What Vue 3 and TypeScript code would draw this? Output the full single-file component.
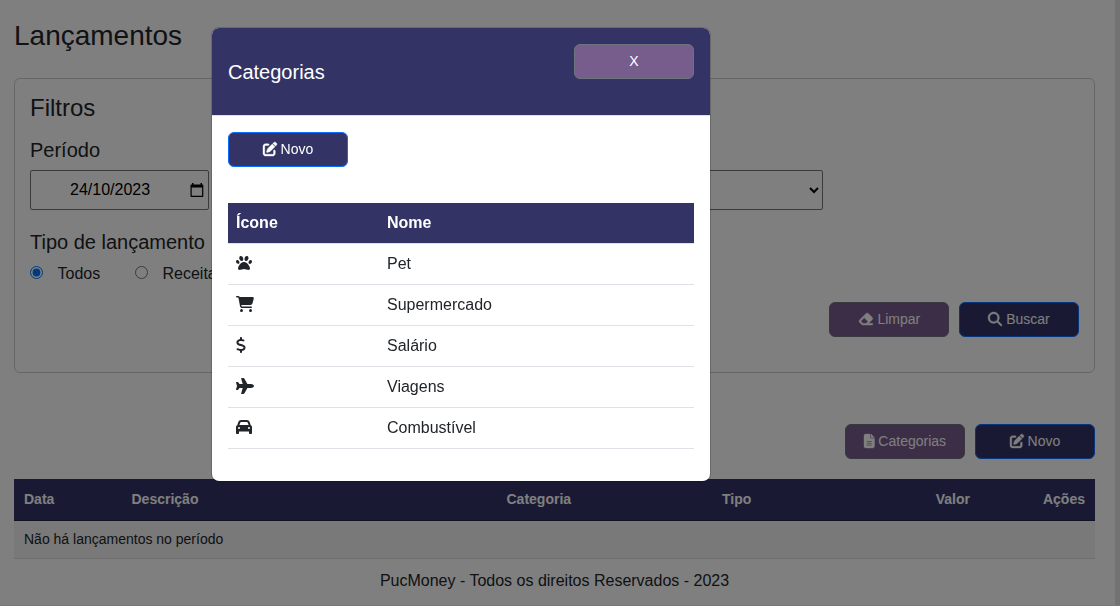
<script setup lang="ts">
import { ref } from 'vue'

interface Icon {
  width: number
  path: string
}

interface Category {
  name: string
  icon: Icon
}

const penToSquare: Icon = {
  width: 512,
  path: 'M471.6 21.7c-21.9-21.9-57.3-21.9-79.2 0L362.3 51.7l97.9 97.9 30.1-30.1c21.9-21.9 21.9-57.3 0-79.2L471.6 21.7zm-299.2 220c-6.1 6.1-10.8 13.6-13.5 21.9l-29.6 88.8c-2.9 8.6-.6 18.1 5.8 24.6s15.9 8.7 24.6 5.8l88.8-29.6c8.2-2.7 15.7-7.4 21.9-13.5L437.7 172.3 339.7 74.3 172.4 241.7zM96 64C43 64 0 107 0 160V416c0 53 43 96 96 96H352c53 0 96-43 96-96V320c0-17.7-14.3-32-32-32s-32 14.3-32 32v96c0 17.7-14.3 32-32 32H96c-17.7 0-32-14.3-32-32V160c0-17.7 14.3-32 32-32h96c17.7 0 32-14.3 32-32s-14.3-32-32-32H96z',
}
const magnifier: Icon = {
  width: 512,
  path: 'M416 208c0 45.9-14.9 88.3-40 122.7L502.6 457.4c12.5 12.5 12.5 32.8 0 45.3s-32.8 12.5-45.3 0L330.7 376c-34.4 25.2-76.8 40-122.7 40C93.1 416 0 322.9 0 208S93.1 0 208 0S416 93.1 416 208zM208 352a144 144 0 1 0 0-288 144 144 0 1 0 0 288z',
}
const eraser: Icon = {
  width: 576,
  path: 'M290.7 57.4L57.4 290.7c-25 25-25 65.5 0 90.5l80 80c12 12 28.3 18.7 45.3 18.7H288h9.4H512c17.7 0 32-14.3 32-32s-14.3-32-32-32H387.9L518.6 285.3c25-25 25-65.5 0-90.5L381.3 57.4c-25-25-65.5-25-90.5 0zM297.4 416H288l-105.4 0-80-80L227.3 211.3 364.7 348.7 297.4 416z',
}
const fileLines: Icon = {
  width: 384,
  path: 'M64 0C28.7 0 0 28.7 0 64V448c0 35.3 28.7 64 64 64H320c35.3 0 64-28.7 64-64V160H256c-17.7 0-32-14.3-32-32V0H64zM256 0V128H384L256 0zM112 256H272c8.8 0 16 7.2 16 16s-7.2 16-16 16H112c-8.8 0-16-7.2-16-16s7.2-16 16-16zm0 64H272c8.8 0 16 7.2 16 16s-7.2 16-16 16H112c-8.8 0-16-7.2-16-16s7.2-16 16-16zm0 64H272c8.8 0 16 7.2 16 16s-7.2 16-16 16H112c-8.8 0-16-7.2-16-16s7.2-16 16-16z',
}

const categories: Category[] = [
  {
    name: 'Pet',
    icon: {
      width: 512,
      path: 'M226.5 92.9c14.3 42.9-.3 86.2-32.6 96.8s-70.1-15.6-84.4-58.5s.3-86.2 32.6-96.8s70.1 15.6 84.4 58.5zM100.4 198.6c18.9 32.4 14.3 70.1-10.2 84.1s-59.7-.9-78.5-33.3S-2.7 179.3 21.8 165.3s59.7 .9 78.5 33.3zM69.2 401.2C121.6 259.9 214.7 224 256 224s134.4 35.9 186.8 177.2c3.6 9.7 5.2 20.1 5.2 30.5v1.6c0 25.8-20.9 46.7-46.7 46.7c-11.5 0-22.9-1.4-34-4.2l-88-22c-15.3-3.8-31.3-3.8-46.6 0l-88 22c-11.1 2.8-22.5 4.2-34 4.2C84.9 480 64 459.1 64 433.3v-1.6c0-10.4 1.6-20.8 5.2-30.5zM421.8 282.7c-24.5-14-29.1-51.7-10.2-84.1s54-47.3 78.5-33.3s29.1 51.7 10.2 84.1s-54 47.3-78.5 33.3zM310.1 189.7c-32.3-10.6-46.9-53.9-32.6-96.8s52.1-69.1 84.4-58.5s46.9 53.9 32.6 96.8s-52.1 69.1-84.4 58.5z',
    },
  },
  {
    name: 'Supermercado',
    icon: {
      width: 576,
      path: 'M0 24C0 10.7 10.7 0 24 0H69.5c22 0 41.5 12.8 50.6 32h411c26.3 0 45.5 25 38.6 50.4l-41 152.3c-8.5 31.4-37 53.3-69.5 53.3H170.7l5.4 28.5c2.2 11.3 12.1 19.5 23.6 19.5H488c13.3 0 24 10.7 24 24s-10.7 24-24 24H199.7c-34.6 0-64.3-24.6-70.7-58.5L77.4 54.5c-.7-3.8-4-6.5-7.9-6.5H24C10.7 48 0 37.3 0 24zM128 464a48 48 0 1 1 96 0 48 48 0 1 1 -96 0zm336-48a48 48 0 1 1 0 96 48 48 0 1 1 0-96z',
    },
  },
  {
    name: 'Salário',
    icon: {
      width: 320,
      path: 'M160 0c17.7 0 32 14.3 32 32V67.7c1.6 .2 3.1 .4 4.7 .7c.4 .1 .7 .1 1.1 .2l48 8.8c17.4 3.2 28.9 19.9 25.7 37.2s-19.9 28.9-37.2 25.7l-47.5-8.7c-31.3-4.6-58.9-1.5-78.3 6.2s-27.2 18.3-29 28.1c-2 10.7-.5 16.7 1.2 20.4c1.8 3.9 5.5 8.3 12.8 13.2c16.3 10.7 41.3 17.7 73.7 26.3l2.9 .8c28.6 7.6 63.6 16.8 89.6 33.8c14.2 9.3 27.6 21.9 35.9 39.5c8.5 17.9 10.3 37.9 6.4 59.2c-6.9 38-33.1 63.4-65.6 76.7c-13.7 5.6-28.6 9.2-44.4 11V480c0 17.7-14.3 32-32 32s-32-14.3-32-32V445.1c-.4-.1-.9-.1-1.3-.2l-.2 0 0 0c-24.4-3.8-64.5-14.3-91.5-26.3c-16.1-7.2-23.4-26.1-16.2-42.2s26.1-23.4 42.2-16.2c20.9 9.3 55.3 18.5 75.2 21.6c31.9 4.7 58.2 2 76-5.3c16.9-6.9 24.6-16.9 26.8-28.9c1.9-10.6 .4-16.7-1.3-20.4c-1.9-4-5.6-8.4-13-13.3c-16.4-10.7-41.5-17.7-74-26.3l-2.8-.7 0 0C119.4 279.3 84.4 270 58.4 253c-14.2-9.3-27.5-22-35.8-39.6c-8.4-17.9-10.1-37.9-6.1-59.2C23.7 116 52.3 91.2 84.8 78.3c13.3-5.3 27.9-8.9 43.2-11V32c0-17.7 14.3-32 32-32z',
    },
  },
  {
    name: 'Viagens',
    icon: {
      width: 576,
      path: 'M482.3 192c34.2 0 93.7 29 93.7 64c0 36-59.5 64-93.7 64l-116.6 0L265.2 495.9c-5.7 10-16.3 16.1-27.8 16.1l-56.2 0c-10.6 0-18.3-10.2-15.4-20.4l49-171.6L112 320 68.8 377.6c-3 4-7.8 6.4-12.8 6.4l-42 0c-7.8 0-14-6.3-14-14c0-1.3 .2-2.6 .5-3.9L32 256 .5 145.9c-.4-1.3-.5-2.6-.5-3.9c0-7.8 6.3-14 14-14l42 0c5 0 9.8 2.4 12.8 6.4L112 192l102.9 0-49-171.6C162.9 10.2 170.6 0 181.2 0l56.2 0c11.5 0 22.1 6.2 27.8 16.1L365.7 192l116.6 0z',
    },
  },
  {
    name: 'Combustível',
    icon: {
      width: 512,
      path: 'M135.2 117.4L109.1 192H402.9l-26.1-74.6C372.3 104.6 360.2 96 346.6 96H165.4c-13.6 0-25.7 8.6-30.2 21.4zM39.6 196.8L74.8 96.3C88.3 57.8 124.6 32 165.4 32H346.6c40.8 0 77.1 25.8 90.6 64.3l35.2 100.5c23.2 9.6 39.6 32.5 39.6 59.2V400v48c0 17.7-14.3 32-32 32H448c-17.7 0-32-14.3-32-32V400H96v48c0 17.7-14.3 32-32 32H32c-17.7 0-32-14.3-32-32V400 256c0-26.7 16.4-49.6 39.6-59.2zM128 288a32 32 0 1 0 -64 0 32 32 0 1 0 64 0zm288 32a32 32 0 1 0 0-64 32 32 0 1 0 0 64z',
    },
  },
]

const entryType = ref('todos')
</script>

<template>
  <div class="screen">
    <main class="page">
      <h1 class="title">Lançamentos</h1>

      <section class="filters">
        <h2 class="filters-title">Filtros</h2>
        <h3 class="label label-period">Período</h3>
        <div class="fields">
          <div class="date">
            <span class="date-value">24/10/2023</span>
            <svg class="calendar" viewBox="0 0 14 15">
              <path d="M2 0h1.500v1.500h7V0H12v1.500h.5q.8 0 .8.8v10.900q0 .8-.8.8H1.300q-.8 0-.8-.8V2.300q0-.8.8-.8H2zM1.700 4.500v8.300h10.400V4.500z" fill-rule="evenodd" />
            </svg>
          </div>
          <select class="account" aria-label="Categoria"><option></option></select>
        </div>
        <h3 class="label label-type">Tipo de lançamento</h3>
        <div class="radios">
          <label class="radio"><input v-model="entryType" type="radio" value="todos" />Todos</label>
          <label class="radio"><input v-model="entryType" type="radio" value="receitas" />Receitas</label>
        </div>
        <div class="filter-actions">
          <button class="btn secondary">
            <svg class="icon" :viewBox="`0 0 ${eraser.width} 512`"><path :d="eraser.path" /></svg>
            Limpar
          </button>
          <button class="btn primary">
            <svg class="icon" :viewBox="`0 0 ${magnifier.width} 512`"><path :d="magnifier.path" /></svg>
            Buscar
          </button>
        </div>
      </section>

      <div class="list-actions">
        <button class="btn secondary">
          <svg class="icon" :viewBox="`0 0 ${fileLines.width} 512`"><path :d="fileLines.path" /></svg>
          Categorias
        </button>
        <button class="btn primary">
          <svg class="icon" :viewBox="`0 0 ${penToSquare.width} 512`"><path :d="penToSquare.path" /></svg>
          Novo
        </button>
      </div>

      <section class="entries">
        <div class="entries-head">
          <span>Data</span>
          <span>Descrição</span>
          <span>Categoria</span>
          <span>Tipo</span>
          <span class="right">Valor</span>
          <span class="right">Ações</span>
        </div>
        <div class="entries-empty">Não há lançamentos no período</div>
      </section>

      <footer class="footer">PucMoney - Todos os direitos Reservados - 2023</footer>
    </main>
    <div class="track"></div>

    <div class="backdrop">
      <div class="modal" role="dialog">
        <header class="modal-head">
          <h2 class="modal-title">Categorias</h2>
          <button class="btn secondary">X</button>
        </header>
        <div class="modal-body">
          <button class="btn primary">
            <svg class="icon" :viewBox="`0 0 ${penToSquare.width} 512`"><path :d="penToSquare.path" /></svg>
            Novo
          </button>
          <div class="categories">
            <div class="row row-head"><span>Ícone</span><span>Nome</span></div>
            <div v-for="c in categories" :key="c.name" class="row">
              <span><svg class="icon" :viewBox="`0 0 ${c.icon.width} 512`"><path :d="c.icon.path" /></svg></span>
              <span>{{ c.name }}</span>
            </div>
          </div>
        </div>
      </div>
    </div>
  </div>
</template>

<style>
html,
body {
  margin: 0;
  overflow: hidden;
}
</style>

<style scoped>
.screen,
.screen * {
  box-sizing: border-box;
}
.screen {
  display: flex;
  height: 606px;
  overflow: hidden;
  border-bottom: 1px solid #f4ecf0;
  background: #fff;
  color: #212529;
  font: 16px/24px "Liberation Sans", Arial, sans-serif;
}
.page {
  flex: 1;
  padding: 19px 20px 0 14px;
}
.track {
  width: 5px;
  background: #e4e4e2;
}
h1,
h2,
h3 {
  margin: 0;
  font-weight: 400;
}
.title {
  height: 59px;
  font-size: 28px;
  line-height: 34px;
}
.filters {
  height: 295px;
  padding: 14px 15px 0;
  border: 1px solid #ccc;
  border-radius: 6px;
}
.filters-title {
  font-size: 24px;
  line-height: 29px;
}
.label {
  font-size: 20px;
  line-height: 24px;
}
.label-period {
  margin-top: 16px;
  padding-bottom: 8px;
}
.label-type {
  margin-top: 20px;
}
.fields {
  display: flex;
  gap: 10px;
}
.date {
  display: flex;
  align-items: center;
  width: 179px;
  height: 40px;
  padding: 0 4px 0 39px;
  border: 1px solid #767676;
  border-radius: 2px;
  color: #000;
}
.date-value {
  flex: 1;
}
.calendar {
  width: 14px;
  height: 15px;
}
.account {
  width: 604px;
  height: 40px;
  padding: 0;
  border: 1px solid #767676;
  border-radius: 2px;
  background: #fff;
}
.radios {
  display: flex;
  margin-top: 8px;
}
.radio {
  display: flex;
  align-items: center;
  width: 105px;
}
.radio input {
  width: 13px;
  height: 13px;
  margin: 0 14.500px 3px 0;
}
.filter-actions,
.list-actions {
  display: flex;
  justify-content: flex-end;
  gap: 10px;
}
.filter-actions {
  margin-top: 16px;
}
.list-actions {
  margin-top: 51px;
}
.btn {
  width: 120px;
  height: 35px;
  padding: 0;
  border: 1px solid;
  border-radius: 6px;
  color: #fff;
  font: 14px/21px "Liberation Sans", Arial, sans-serif;
}
.primary {
  background: #333366;
  border-color: #0d6efd;
}
.secondary {
  background: #765d8c;
  border-color: #6c757d;
}
.icon {
  height: 1em;
  overflow: visible;
  vertical-align: -0.125em;
  fill: currentColor;
}
.btn .icon {
  stroke: currentColor;
  stroke-width: 14;
}
.entries {
  margin-top: 20px;
  font-size: 14px;
}
.entries-head {
  display: grid;
  grid-template-columns: 107.500px 375px 215.500px 150px 98px 115px;
  align-items: center;
  height: 42px;
  padding: 0 0 2px 10px;
  border-bottom: 1px solid #222244;
  background: #333366;
  color: #fff;
  font-weight: 700;
}
.right {
  text-align: right;
}
.entries-empty {
  height: 38px;
  padding: 6px 10px;
  border-bottom: 1px solid #dfdfdf;
  background: #f2f2f2;
}
.footer {
  margin-top: 10px;
  text-align: center;
}
.backdrop {
  position: fixed;
  inset: 0;
  padding: 27px 0 0 211px;
  background: rgba(0, 0, 0, 0.5);
}
.modal {
  width: 500px;
  height: 455px;
  border: 1px solid rgba(0, 0, 0, 0.175);
  border-radius: 8px;
  background: #fff;
  background-clip: padding-box;
}
.modal-head {
  display: flex;
  justify-content: space-between;
  height: 88px;
  padding: 16px;
  border-bottom: 1px solid #dee2e6;
  border-radius: 7px 7px 0 0;
  background: #333366;
}
.modal-title {
  align-self: center;
  color: #fff;
  font-size: 20px;
  line-height: 30px;
}
.modal-body {
  padding: 16px;
}
.categories {
  margin-top: 36px;
}
.row {
  display: grid;
  grid-template-columns: 151px 1fr;
  height: 41px;
  padding: 8px;
  border-bottom: 1px solid #dee2e6;
}
.row-head {
  background: #333366;
  background-clip: padding-box;
  color: #fff;
  font-weight: 700;
}
</style>
